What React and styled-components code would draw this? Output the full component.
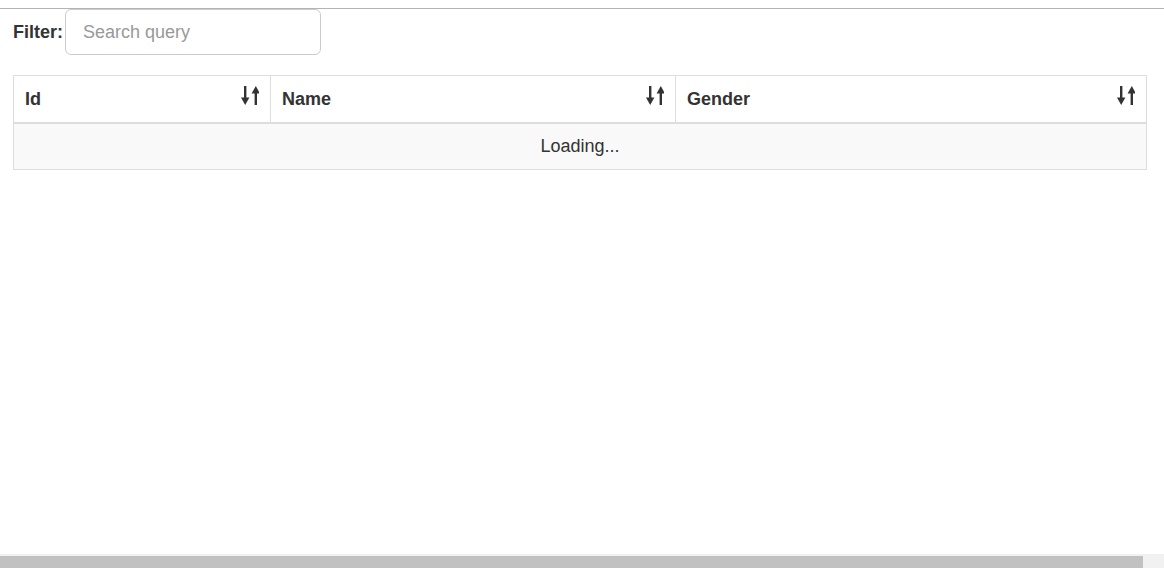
import React from "react";
import styled, { createGlobalStyle } from "styled-components";

const Global = createGlobalStyle`
  html, body { margin: 0; padding: 0; background: #fff; }
  body {
    font-family: "Liberation Sans", Arial, Helvetica, sans-serif;
    font-size: 18px;
    color: #333;
  }
`;

const Page = styled.div`
  padding-top: 8px;
`;

const Divider = styled.div`
  height: 1px;
  background: #b4b4b4;
`;

const Content = styled.div`
  padding: 0 13px;
`;

const FilterRow = styled.div`
  display: flex;
  align-items: center;
  height: 46px;
`;

const Label = styled.label`
  font-weight: bold;
  font-size: 18px;
  line-height: 26px;
  margin-top: -1px;
`;

const SearchInput = styled.input`
  box-sizing: border-box;
  width: 256px;
  height: 46px;
  padding: 10px 16px 10px 17px;
  margin-left: 2px;
  font-family: inherit;
  font-size: 18px;
  line-height: 1.3333;
  color: #555;
  border: 1px solid #ccc;
  border-radius: 6px;
  outline: none;
  &::placeholder { color: #999; }
`;

const Table = styled.table`
  margin-top: 20px;
  width: 1133px;
  border-collapse: collapse;
  table-layout: fixed;
  border: 1px solid #ddd;
`;

const Th = styled.th`
  border: 1px solid #ddd;
  border-bottom: 2px solid #ddd;
  padding: 11px 11px 9px 11px;
  text-align: left;
  font-weight: bold;
  line-height: 25.7px;
  vertical-align: top;
`;

const HeadInner = styled.div`
  display: flex;
  justify-content: space-between;
  align-items: flex-start;
`;

const Td = styled.td`
  border: 1px solid #ddd;
  padding: 10px;
  line-height: 25.7px;
  text-align: ${(p) => (p.$center ? "center" : "left")};
  background: #f9f9f9;
`;

const SortSvg = styled.svg`
  display: block;
  width: 18px;
  height: 20px;
  fill: #333;
  margin-top: -1px;
`;

const ScrollBar = styled.div`
  position: fixed;
  left: 0;
  right: 0;
  bottom: 0;
  box-sizing: border-box;
  height: 14px;
  padding-top: 2px;
  display: flex;
  background: #f1f1f1;
`;

const Thumb = styled.div`
  width: 1143px;
  background: #c1c1c1;
`;

const SortIcon = () => (
  <SortSvg viewBox="0 0 18 20">
    <rect x="3" y="0" width="2.4" height="13" />
    <polygon points="0,11.5 8.4,11.5 4.2,19" />
    <rect x="13.6" y="6" width="2.4" height="13" />
    <polygon points="10.6,7.5 19,7.5 14.8,0" />
  </SortSvg>
);

const columns = [
  { label: "Id", width: 257 },
  { label: "Name", width: 405 },
  { label: "Gender", width: 471 },
];

export default function App() {
  return (
    <>
      <Global />
      <Page>
        <Divider />
        <Content>
          <FilterRow>
            <Label htmlFor="q">Filter:</Label>
            <SearchInput id="q" placeholder="Search query" />
          </FilterRow>
          <Table>
            <colgroup>
              {columns.map((c) => (
                <col key={c.label} style={{ width: c.width }} />
              ))}
            </colgroup>
            <thead>
              <tr>
                {columns.map((c) => (
                  <Th key={c.label}>
                    <HeadInner>
                      <span>{c.label}</span>
                      <SortIcon />
                    </HeadInner>
                  </Th>
                ))}
              </tr>
            </thead>
            <tbody>
              <tr>
                <Td $center colSpan={3}>Loading...</Td>
              </tr>
            </tbody>
          </Table>
        </Content>
      </Page>
      <ScrollBar>
        <Thumb />
      </ScrollBar>
    </>
  );
}
